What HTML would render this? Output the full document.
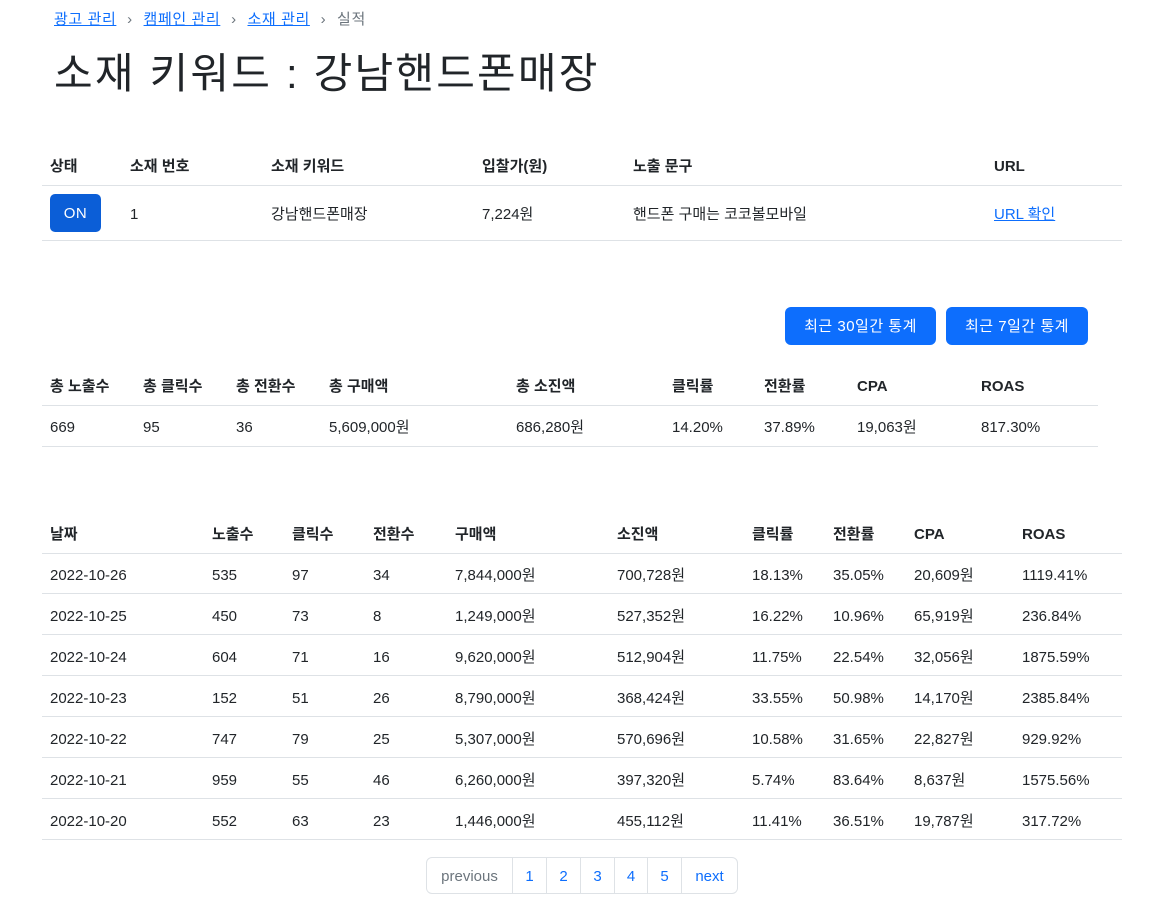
<!DOCTYPE html>
<html><head><meta charset="utf-8"><style>
*{margin:0;padding:0;box-sizing:border-box}
body{width:1158px;height:905px;background:#fff;font-family:"Liberation Sans","Noto Sans CJK KR",sans-serif;color:#212529;font-size:15px;position:relative;overflow:hidden}
.a{position:absolute;white-space:nowrap;line-height:20px;padding-top:2px}
.b{font-weight:bold}
.ln{position:absolute;height:1px;background:#dee2e6}
a{color:#0d6efd}
.btn{position:absolute;background:#0d6efd;color:#fff;border-radius:6px;text-align:center;line-height:38px;height:38px;font-size:15px;letter-spacing:0.5px}
.pg{position:absolute;top:857px;height:37px;border:1px solid #dee2e6;line-height:37px;color:#0d6efd;text-align:center;font-size:15px}
</style></head><body>
<div class="a" style="left:54px;top:8px;font-size:15px;letter-spacing:0.6px"><a href="#">광고 관리</a> <span style="color:#6c757d;margin:0 6px">›</span> <a href="#">캠페인 관리</a> <span style="color:#6c757d;margin:0 6px">›</span> <a href="#">소재 관리</a> <span style="color:#6c757d;margin:0 6px">›</span> <span style="color:#6c757d">실적</span></div>
<div class="a" style="left:54px;top:47px;font-size:42px;line-height:50px;letter-spacing:2.2px">소재 키워드 : 강남핸드폰매장</div>

<div class="a b" style="left:50px;top:155px">상태</div>
<div class="a b" style="left:130px;top:155px">소재 번호</div>
<div class="a b" style="left:271px;top:155px">소재 키워드</div>
<div class="a b" style="left:482px;top:155px">입찰가(원)</div>
<div class="a b" style="left:633px;top:155px">노출 문구</div>
<div class="a b" style="left:994px;top:155px">URL</div>
<div class="ln" style="left:42px;width:1080px;top:185px"></div>
<div class="btn" style="left:50px;top:194px;width:51px;height:38px;background:#0b5ed7;line-height:40px;border-radius:5px">ON</div>
<div class="a" style="left:130px;top:203px">1</div>
<div class="a" style="left:271px;top:203px">강남핸드폰매장</div>
<div class="a" style="left:482px;top:203px">7,224원</div>
<div class="a" style="left:633px;top:203px">핸드폰 구매는 코코볼모바일</div>
<div class="a" style="left:994px;top:203px"><a href="#">URL 확인</a></div>
<div class="ln" style="left:42px;width:1080px;top:240px"></div>

<div class="btn" style="left:785px;top:307px;width:151px;line-height:40px">최근 30일간 통계</div>
<div class="btn" style="left:946px;top:307px;width:142px;line-height:40px">최근 7일간 통계</div>

<div class="a b" style="left:50px;top:375px">총 노출수</div>
<div class="a b" style="left:143px;top:375px">총 클릭수</div>
<div class="a b" style="left:236px;top:375px">총 전환수</div>
<div class="a b" style="left:329px;top:375px">총 구매액</div>
<div class="a b" style="left:516px;top:375px">총 소진액</div>
<div class="a b" style="left:672px;top:375px">클릭률</div>
<div class="a b" style="left:764px;top:375px">전환률</div>
<div class="a b" style="left:857px;top:375px">CPA</div>
<div class="a b" style="left:981px;top:375px">ROAS</div>
<div class="ln" style="left:42px;width:1056px;top:405px"></div>
<div class="a" style="left:50px;top:416px">669</div>
<div class="a" style="left:143px;top:416px">95</div>
<div class="a" style="left:236px;top:416px">36</div>
<div class="a" style="left:329px;top:416px">5,609,000원</div>
<div class="a" style="left:516px;top:416px">686,280원</div>
<div class="a" style="left:672px;top:416px">14.20%</div>
<div class="a" style="left:764px;top:416px">37.89%</div>
<div class="a" style="left:857px;top:416px">19,063원</div>
<div class="a" style="left:981px;top:416px">817.30%</div>
<div class="ln" style="left:42px;width:1056px;top:446px"></div>

<div class="a b" style="left:50px;top:523px">날짜</div>
<div class="a b" style="left:212px;top:523px">노출수</div>
<div class="a b" style="left:292px;top:523px">클릭수</div>
<div class="a b" style="left:373px;top:523px">전환수</div>
<div class="a b" style="left:455px;top:523px">구매액</div>
<div class="a b" style="left:617px;top:523px">소진액</div>
<div class="a b" style="left:752px;top:523px">클릭률</div>
<div class="a b" style="left:833px;top:523px">전환률</div>
<div class="a b" style="left:914px;top:523px">CPA</div>
<div class="a b" style="left:1022px;top:523px">ROAS</div>
<div class="ln" style="left:42px;width:1080px;top:553px"></div>

<div style="position:absolute;left:0;top:553px">
<div style="position:relative;height:41px"><div class="a" style="left:50px;top:11px">2022-10-26</div><div class="a" style="left:212px;top:11px">535</div><div class="a" style="left:292px;top:11px">97</div><div class="a" style="left:373px;top:11px">34</div><div class="a" style="left:455px;top:11px">7,844,000원</div><div class="a" style="left:617px;top:11px">700,728원</div><div class="a" style="left:752px;top:11px">18.13%</div><div class="a" style="left:833px;top:11px">35.05%</div><div class="a" style="left:914px;top:11px">20,609원</div><div class="a" style="left:1022px;top:11px">1119.41%</div><div class="ln" style="left:42px;width:1080px;top:40px"></div></div>
<div style="position:relative;height:41px"><div class="a" style="left:50px;top:11px">2022-10-25</div><div class="a" style="left:212px;top:11px">450</div><div class="a" style="left:292px;top:11px">73</div><div class="a" style="left:373px;top:11px">8</div><div class="a" style="left:455px;top:11px">1,249,000원</div><div class="a" style="left:617px;top:11px">527,352원</div><div class="a" style="left:752px;top:11px">16.22%</div><div class="a" style="left:833px;top:11px">10.96%</div><div class="a" style="left:914px;top:11px">65,919원</div><div class="a" style="left:1022px;top:11px">236.84%</div><div class="ln" style="left:42px;width:1080px;top:40px"></div></div>
<div style="position:relative;height:41px"><div class="a" style="left:50px;top:11px">2022-10-24</div><div class="a" style="left:212px;top:11px">604</div><div class="a" style="left:292px;top:11px">71</div><div class="a" style="left:373px;top:11px">16</div><div class="a" style="left:455px;top:11px">9,620,000원</div><div class="a" style="left:617px;top:11px">512,904원</div><div class="a" style="left:752px;top:11px">11.75%</div><div class="a" style="left:833px;top:11px">22.54%</div><div class="a" style="left:914px;top:11px">32,056원</div><div class="a" style="left:1022px;top:11px">1875.59%</div><div class="ln" style="left:42px;width:1080px;top:40px"></div></div>
<div style="position:relative;height:41px"><div class="a" style="left:50px;top:11px">2022-10-23</div><div class="a" style="left:212px;top:11px">152</div><div class="a" style="left:292px;top:11px">51</div><div class="a" style="left:373px;top:11px">26</div><div class="a" style="left:455px;top:11px">8,790,000원</div><div class="a" style="left:617px;top:11px">368,424원</div><div class="a" style="left:752px;top:11px">33.55%</div><div class="a" style="left:833px;top:11px">50.98%</div><div class="a" style="left:914px;top:11px">14,170원</div><div class="a" style="left:1022px;top:11px">2385.84%</div><div class="ln" style="left:42px;width:1080px;top:40px"></div></div>
<div style="position:relative;height:41px"><div class="a" style="left:50px;top:11px">2022-10-22</div><div class="a" style="left:212px;top:11px">747</div><div class="a" style="left:292px;top:11px">79</div><div class="a" style="left:373px;top:11px">25</div><div class="a" style="left:455px;top:11px">5,307,000원</div><div class="a" style="left:617px;top:11px">570,696원</div><div class="a" style="left:752px;top:11px">10.58%</div><div class="a" style="left:833px;top:11px">31.65%</div><div class="a" style="left:914px;top:11px">22,827원</div><div class="a" style="left:1022px;top:11px">929.92%</div><div class="ln" style="left:42px;width:1080px;top:40px"></div></div>
<div style="position:relative;height:41px"><div class="a" style="left:50px;top:11px">2022-10-21</div><div class="a" style="left:212px;top:11px">959</div><div class="a" style="left:292px;top:11px">55</div><div class="a" style="left:373px;top:11px">46</div><div class="a" style="left:455px;top:11px">6,260,000원</div><div class="a" style="left:617px;top:11px">397,320원</div><div class="a" style="left:752px;top:11px">5.74%</div><div class="a" style="left:833px;top:11px">83.64%</div><div class="a" style="left:914px;top:11px">8,637원</div><div class="a" style="left:1022px;top:11px">1575.56%</div><div class="ln" style="left:42px;width:1080px;top:40px"></div></div>
<div style="position:relative;height:41px"><div class="a" style="left:50px;top:11px">2022-10-20</div><div class="a" style="left:212px;top:11px">552</div><div class="a" style="left:292px;top:11px">63</div><div class="a" style="left:373px;top:11px">23</div><div class="a" style="left:455px;top:11px">1,446,000원</div><div class="a" style="left:617px;top:11px">455,112원</div><div class="a" style="left:752px;top:11px">11.41%</div><div class="a" style="left:833px;top:11px">36.51%</div><div class="a" style="left:914px;top:11px">19,787원</div><div class="a" style="left:1022px;top:11px">317.72%</div><div class="ln" style="left:42px;width:1080px;top:40px"></div></div>
</div>

<div class="pg" style="left:426px;width:87px;color:#6c757d;border-radius:6px 0 0 6px">previous</div>
<div class="pg" style="left:512px;width:35px">1</div>
<div class="pg" style="left:546px;width:35px">2</div>
<div class="pg" style="left:580px;width:35px">3</div>
<div class="pg" style="left:614px;width:34px">4</div>
<div class="pg" style="left:647px;width:35px">5</div>
<div class="pg" style="left:681px;width:57px;border-radius:0 6px 6px 0">next</div>
</body></html>
